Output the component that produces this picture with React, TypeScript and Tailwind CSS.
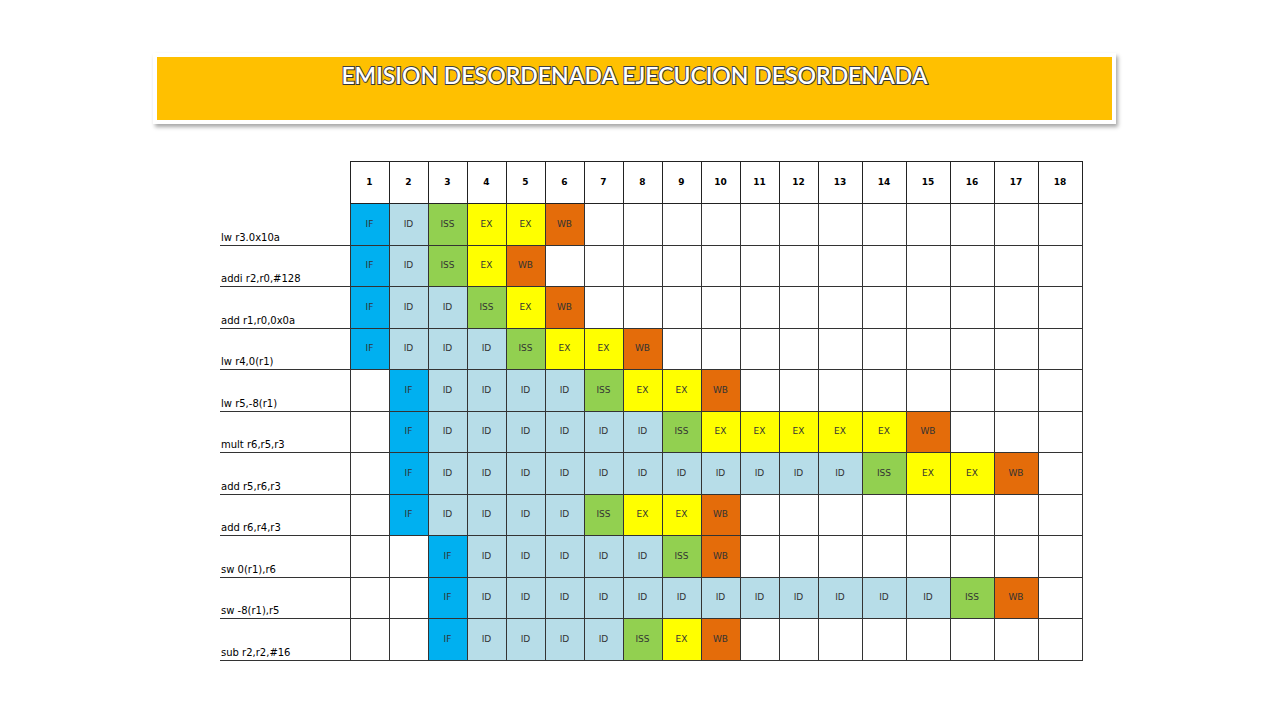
import React from "react";

type Stage = "IF" | "ID" | "ISS" | "EX" | "WB" | "";

const rows: { label: string; start: number; stages: Stage[] }[] = [
  { label: "lw r3.0x10a", start: 1, stages: ["IF", "ID", "ISS", "EX", "EX", "WB"] },
  { label: "addi r2,r0,#128", start: 1, stages: ["IF", "ID", "ISS", "EX", "WB"] },
  { label: "add r1,r0,0x0a", start: 1, stages: ["IF", "ID", "ID", "ISS", "EX", "WB"] },
  { label: "lw r4,0(r1)", start: 1, stages: ["IF", "ID", "ID", "ID", "ISS", "EX", "EX", "WB"] },
  { label: "lw r5,-8(r1)", start: 2, stages: ["IF", "ID", "ID", "ID", "ID", "ISS", "EX", "EX", "WB"] },
  { label: "mult r6,r5,r3", start: 2, stages: ["IF", "ID", "ID", "ID", "ID", "ID", "ID", "ISS", "EX", "EX", "EX", "EX", "EX", "WB"] },
  { label: "add r5,r6,r3", start: 2, stages: ["IF", "ID", "ID", "ID", "ID", "ID", "ID", "ID", "ID", "ID", "ID", "ID", "ISS", "EX", "EX", "WB"] },
  { label: "add r6,r4,r3", start: 2, stages: ["IF", "ID", "ID", "ID", "ID", "ISS", "EX", "EX", "WB"] },
  { label: "sw 0(r1),r6", start: 3, stages: ["IF", "ID", "ID", "ID", "ID", "ID", "ISS", "WB"] },
  { label: "sw -8(r1),r5", start: 3, stages: ["IF", "ID", "ID", "ID", "ID", "ID", "ID", "ID", "ID", "ID", "ID", "ID", "ID", "ISS", "WB"] },
  { label: "sub r2,r2,#16", start: 3, stages: ["IF", "ID", "ID", "ID", "ID", "ISS", "EX", "WB"] },
];

const bg: Record<string, string> = {
  IF: "bg-[#00b0f0]",
  ID: "bg-[#b7dde8]",
  ISS: "bg-[#92d050]",
  EX: "bg-[#ffff00]",
  WB: "bg-[#e46c0a]",
  "": "bg-white",
};

const cols = Array.from({ length: 18 }, (_, i) => i + 1);

export default function App() {
  return (
    <div className="w-[1280px] h-[720px] bg-white overflow-hidden flex flex-col">
      <div className="ml-[153px] mt-[53px] w-[963px] h-[71px] bg-white p-[4px] shadow-[2px_3px_4px_rgba(0,0,0,0.35)]">
        <div className="h-full bg-[#ffc000] flex justify-center pt-[4px]">
          <span
            className="text-white font-semibold text-[23px] leading-[28px] [-webkit-text-stroke:2px_#404040] [paint-order:stroke_fill] [text-shadow:1px_1px_1px_rgba(0,0,0,0.2)]"
            style={{ fontFamily: "Lato, 'Liberation Sans', sans-serif" }}
          >
            EMISION DESORDENADA EJECUCION DESORDENADA
          </span>
        </div>
      </div>

      <table
        className="ml-[220px] mt-[37px] w-[862px] border-collapse table-fixed"
        style={{ fontFamily: "'DejaVu Sans', sans-serif" }}
      >
        <colgroup>
          <col className="w-[130px]" />
          {cols.map((c) => (
            <col key={c} className={c <= 12 ? "w-[39px]" : "w-[44px]"} />
          ))}
        </colgroup>
        <thead>
          <tr className="h-[42px]">
            <th className="p-0"></th>
            {cols.map((c) => (
              <th
                key={c}
                className="p-0 border border-[#222] text-[9px] font-bold text-black text-center"
              >
                {c}
              </th>
            ))}
          </tr>
        </thead>
        <tbody>
          {rows.map((r, ri) => (
            <tr key={ri} className="h-[41.5px]">
              <td className="p-0 pl-[1px] border-b border-[#333] align-bottom text-[10px] leading-[14px] text-black whitespace-nowrap">
                {r.label}
              </td>
              {cols.map((c) => {
                const idx = c - r.start;
                const s: Stage = idx >= 0 && idx < r.stages.length ? r.stages[idx] : "";
                return (
                  <td
                    key={c}
                    className={`p-0 border border-[#333] text-center text-[9px] text-[#333] ${bg[s]}`}
                  >
                    {s}
                  </td>
                );
              })}
            </tr>
          ))}
        </tbody>
      </table>
    </div>
  );
}
